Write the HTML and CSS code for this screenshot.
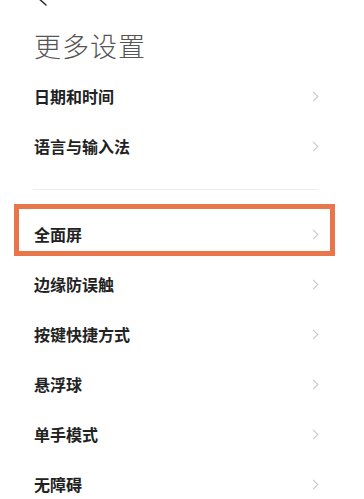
FILE: index.html
```html
<!DOCTYPE html>
<html lang="zh-CN">
<head>
    <meta charset="UTF-8">
    <meta name="viewport" content="width=device-width, initial-scale=1.0">
    <title>更多设置</title>
    <link rel="stylesheet" href="styles.css">
</head>
<body>
    <div class="topbar">
        <svg class="back" width="20" height="20" viewBox="0 0 20 20">
            <path d="M14 2 L5 10 L14 18" fill="none" stroke="#333" stroke-width="1.6" stroke-linecap="round" stroke-linejoin="round"/>
        </svg>
    </div>
    <h1 class="title">更多设置</h1>

    <div class="group">
        <div class="row"><span>日期和时间</span><i class="chevron"></i></div>
        <div class="row"><span>语言与输入法</span><i class="chevron"></i></div>
    </div>

    <div class="divider"></div>

    <div class="group">
        <div class="row marked"><span>全面屏</span><i class="chevron"></i></div>
        <div class="row"><span>边缘防误触</span><i class="chevron"></i></div>
        <div class="row"><span>按键快捷方式</span><i class="chevron"></i></div>
        <div class="row"><span>悬浮球</span><i class="chevron"></i></div>
        <div class="row"><span>单手模式</span><i class="chevron"></i></div>
        <div class="row"><span>无障碍</span><i class="chevron"></i></div>
    </div>
</body>
</html>
```

FILE: styles.css
```css
body {
    margin: 0;
    background: #fff;
    font-family: "Noto Sans CJK SC", "Noto Sans", sans-serif;
    color: #222;
}
.topbar {
    height: 21px;
    overflow: hidden;
    padding-left: 32px;
}
.back {
    display: block;
    margin-top: -13px;
}
.title {
    margin: 0;
    height: 50px;
    line-height: 50px;
    padding-left: 34px;
    font-size: 27px;
    font-weight: 300;
    color: #555;
    letter-spacing: 1px;
}
.group {
    display: flex;
    flex-direction: column;
}
.row {
    position: relative;
    height: 50px;
    display: flex;
    align-items: center;
    justify-content: space-between;
    padding: 0 47px 0 34px;
    font-size: 16px;
    font-weight: 700;
}
.group:first-of-type {
    margin-top: 5px;
}
.chevron {
    width: 6px;
    height: 6px;
    border-top: 1.3px solid #c4c4c4;
    border-right: 1.3px solid #c4c4c4;
    transform: rotate(45deg);
}
.divider {
    height: 1px;
    background: #ececec;
    margin: 18px 46px 19px 33px;
}
.marked::after {
    content: "";
    position: absolute;
    top: -5px;
    bottom: 3px;
    left: 14px;
    right: 29px;
    border: 5px solid #e9764b;
}
```
